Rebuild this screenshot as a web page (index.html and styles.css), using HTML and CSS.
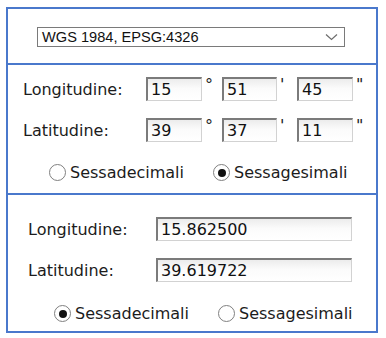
FILE: index.html
```html
<!DOCTYPE html>
<html>
<head>
<meta charset="utf-8">
<link rel="stylesheet" href="styles.css">
</head>
<body>
<div class="panel">
  <div class="sec sec-sel">
    <div class="select">
      <span class="sel-text">WGS 1984, EPSG:4326</span>
      <svg class="chev" width="13" height="8" viewBox="0 0 13 8"><path d="M1 1.5 L6.5 6.5 L12 1.5" fill="none" stroke="#6d6d6d" stroke-width="1.2"/></svg>
    </div>
  </div>
  <div class="sec sec-dms">
    <div class="row">
      <span class="lbl">Longitudine:</span>
      <span class="inp w56">15</span><span class="unit">°</span>
      <span class="inp w55">51</span><span class="unit">'</span>
      <span class="inp w56">45</span><span class="unit">"</span>
    </div>
    <div class="row">
      <span class="lbl">Latitudine:</span>
      <span class="inp w56">39</span><span class="unit">°</span>
      <span class="inp w55">37</span><span class="unit">'</span>
      <span class="inp w56">11</span><span class="unit">"</span>
    </div>
    <div class="radios r1">
      <span class="radio"><span class="dot"></span>Sessadecimali</span>
      <span class="radio"><span class="dot on"></span>Sessagesimali</span>
    </div>
  </div>
  <div class="sec sec-dec">
    <div class="row">
      <span class="lbl lbl2">Longitudine:</span>
      <span class="inp wide">15.862500</span>
    </div>
    <div class="row">
      <span class="lbl lbl2">Latitudine:</span>
      <span class="inp wide">39.619722</span>
    </div>
    <div class="radios r2">
      <span class="radio"><span class="dot on"></span>Sessadecimali</span>
      <span class="radio"><span class="dot"></span>Sessagesimali</span>
    </div>
  </div>
</div>
</body>
</html>
```
FILE: styles.css
```css
html, body {
  margin: 0;
  padding: 0;
  background: #ffffff;
}
body {
  font-family: "DejaVu Sans", Verdana, sans-serif;
  font-size: 16px;
  color: #1c1c1c;
}
.panel {
  margin: 7px 0 0 6px;
  width: 368px;
  border: 2px solid #4a78cc;
}
.sec + .sec {
  border-top: 2px solid #4a78cc;
}
.sec-sel {
  height: 54px;
  display: flex;
  align-items: center;
  padding-left: 29px;
}
.select {
  width: 302px;
  height: 18px;
  border: 1px solid #7a7a7a;
  display: flex;
  align-items: center;
  justify-content: space-between;
  padding-left: 4px;
  box-sizing: content-box;
  margin-top: 2px;
}
.sel-text {
  font-family: "Liberation Sans", Arial, sans-serif;
  font-size: 14.6px;
  color: #111;
}
.chev {
  margin-right: 6px;
}
.sec-dms {
  padding: 12px 0 0 15px;
  height: 116px;
}
.row {
  display: flex;
  align-items: center;
  height: 24px;
}
.sec-dms .row + .row {
  margin-top: 17px;
}
.lbl {
  width: 123px;
}
.lbl2 {
  width: 128px;
}
.inp {
  box-sizing: border-box;
  height: 24px;
  border-style: solid;
  border-width: 2px 1px 1px 2px;
  border-color: #7b7b7b #d2d2d2 #d2d2d2 #7b7b7b;
  background: linear-gradient(#ececec, #fbfbfb 45%, #ffffff);
  padding-left: 3px;
  line-height: 21px;
  color: #111;
}
.w56 { width: 56px; }
.w55 { width: 55px; }
.unit {
  width: 20px;
  padding-left: 3px;
  box-sizing: border-box;
  align-self: flex-start;
  line-height: 16px;
}
.radios {
  display: flex;
  align-items: center;
}
.r1 {
  margin-top: 21px;
  padding-left: 26px;
}
.radio {
  display: inline-flex;
  align-items: center;
  gap: 4px;
}
.radio + .radio {
  margin-left: 29px;
}
.dot {
  width: 17px;
  height: 17px;
  border: 1px solid #808080;
  border-radius: 50%;
  box-sizing: border-box;
  position: relative;
  background: #fff;
}
.dot.on::after {
  content: "";
  position: absolute;
  left: 3.5px;
  top: 3.5px;
  width: 8px;
  height: 8px;
  border-radius: 50%;
  background: #111;
}
.sec-dec {
  padding: 22px 0 0 20px;
  height: 114px;
}
.sec-dec .row + .row {
  margin-top: 17px;
}
.wide {
  width: 196px;
}
.r2 {
  margin-top: 22px;
  padding-left: 26px;
}
```
